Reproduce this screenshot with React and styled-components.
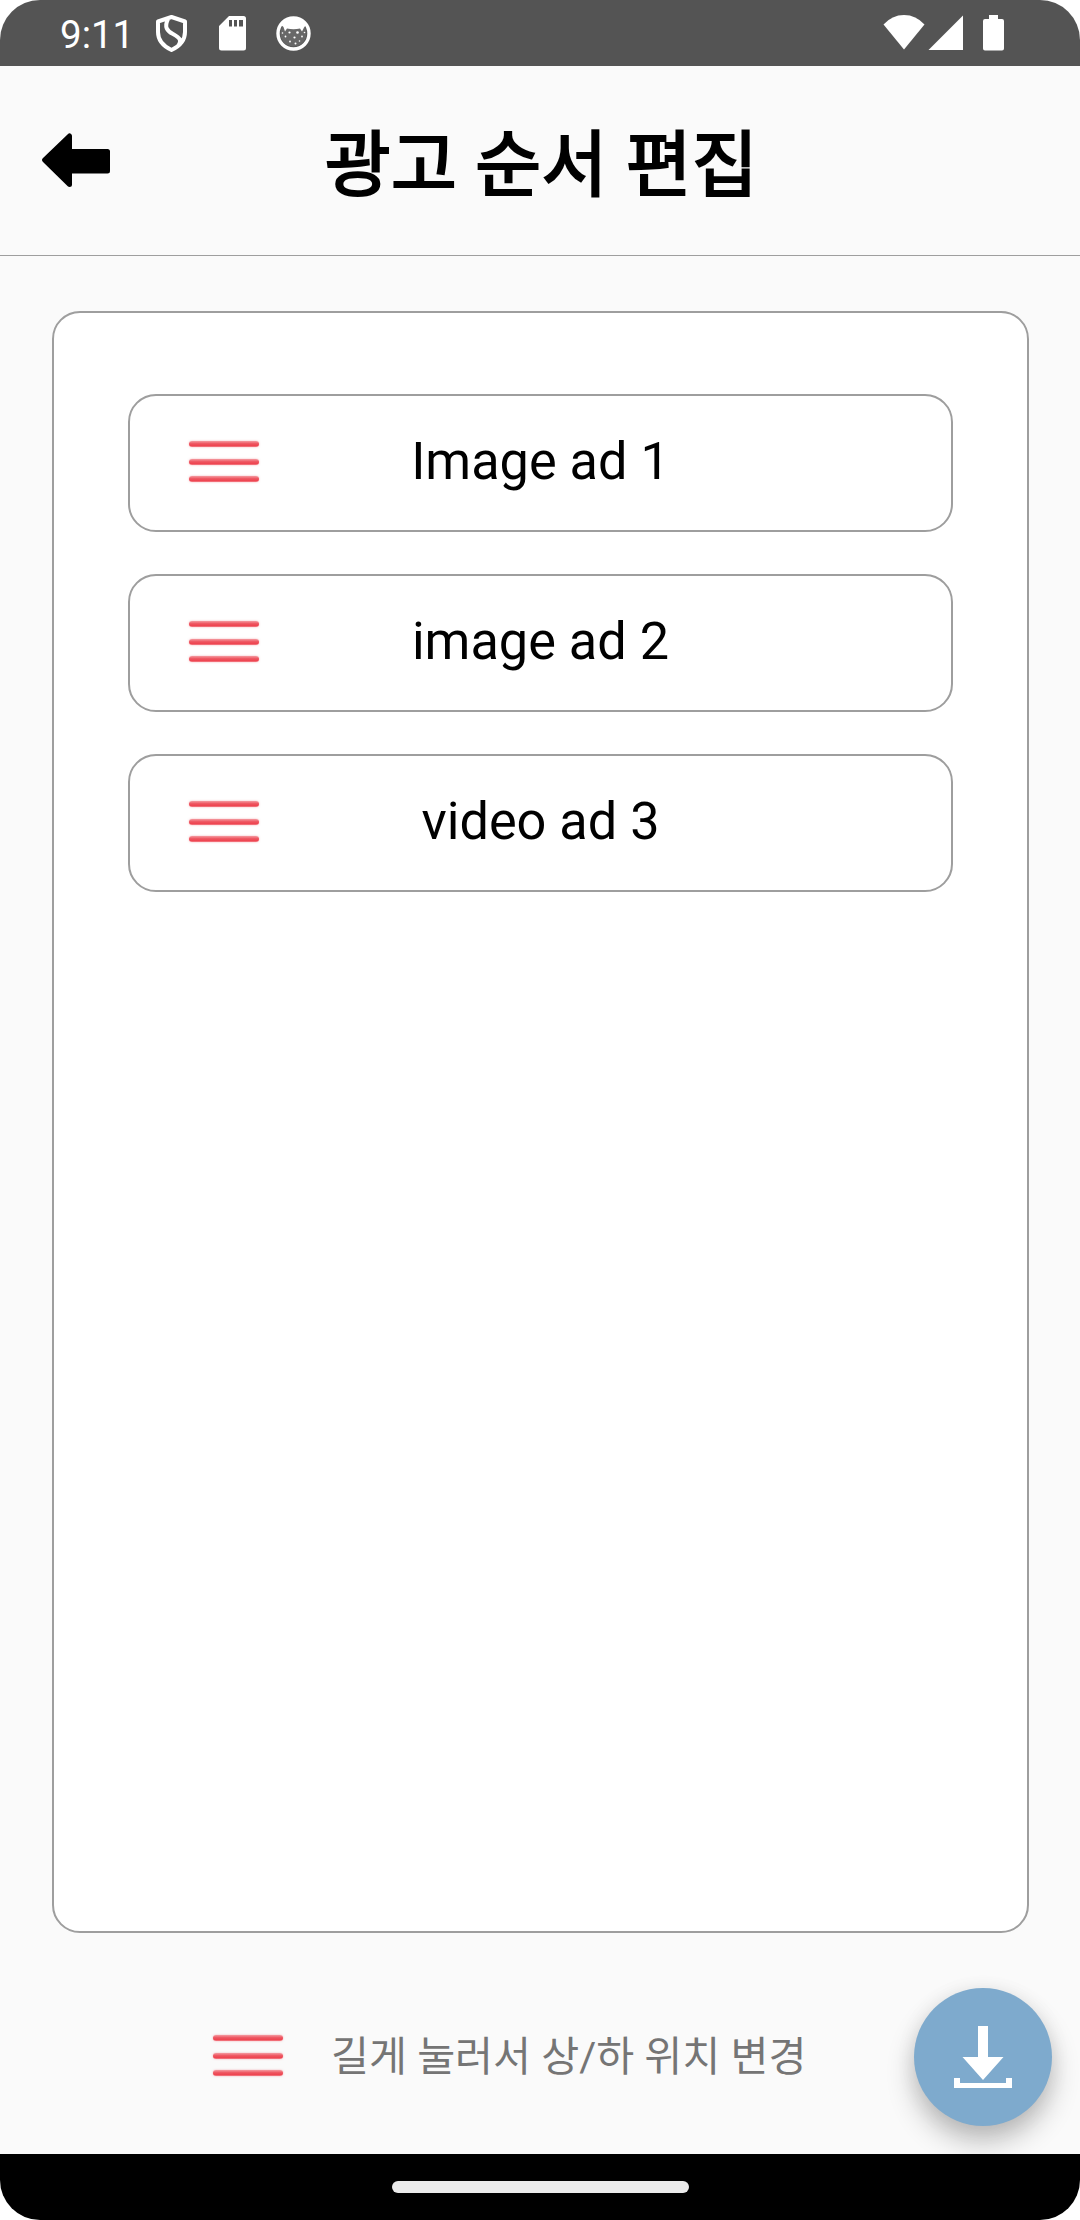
import React from "react";
import styled, { createGlobalStyle } from "styled-components";

const Global = createGlobalStyle`
  * { box-sizing: border-box; }
  body { margin: 0; background: #fff; font-family: Roboto, "Noto Sans CJK KR", sans-serif; }
`;

const Screen = styled.div`
  width: 1080px;
  height: 2220px;
  display: flex;
  flex-direction: column;
  background: #fafafa;
  border-radius: 40px;
  overflow: hidden;
`;

const StatusBar = styled.div`
  height: 66px;
  flex: none;
  display: flex;
  align-items: center;
  background: #545454;
  color: #fff;
  padding: 0 76px 0 60px;
`;

const Clock = styled.span`
  width: 92px;
  font-size: 38.5px;
  line-height: 66px;
  padding-top: 3px;
`;

const StatusIcon = styled.svg`
  display: block;
  flex: none;
  width: ${(p) => p.$w}px;
  height: 66px;
  margin-left: ${(p) => p.$gap || 0}px;
  fill: #fff;
`;

const Spacer = styled.div`
  flex: 1;
`;

const Header = styled.header`
  height: 190px;
  flex: none;
  display: grid;
  grid-template-columns: 150px 1fr 150px;
  align-items: center;
  border-bottom: 1px solid #9e9e9e;
`;

const BackButton = styled.button`
  border: 0;
  padding: 0;
  margin: -2px 0 0 40px;
  width: 72px;
  height: 58px;
  background: none;
  svg { display: block; }
`;

const Title = styled.h1`
  margin: 0;
  padding: 10px 0 0 3px;
  font-size: 71.5px;
  font-weight: 400;
  line-height: 100px;
  letter-spacing: 0.4px;
  text-align: center;
  color: #000;
  -webkit-text-stroke: 2.2px #000;
`;

const Main = styled.main`
  flex: 1;
  display: flex;
  flex-direction: column;
  padding: 55px 51px 0 52px;
`;

const Panel = styled.section`
  height: 1622px;
  flex: none;
  display: flex;
  flex-direction: column;
  gap: 42px;
  padding: 81px 74px;
  background: #fff;
  border: 2px solid #9e9e9e;
  border-radius: 28px;
`;

const AdRow = styled.div`
  height: 138px;
  display: grid;
  grid-template-columns: 72px 1fr 72px;
  align-items: center;
  padding: 0 58px;
  border: 2px solid #9e9e9e;
  border-radius: 28px;
`;

const AdName = styled.span`
  font-size: 52.25px;
  line-height: 62px;
  padding-bottom: 3px;
  text-align: center;
  color: #000;
`;

const Handle = styled.span`
  width: 72px;
  display: flex;
  flex-direction: column;
  align-items: center;
  gap: 11.3px;
  padding-bottom: 3px;
`;

const Bar = styled.i`
  width: 70px;
  height: 6px;
  border-radius: 3px;
  background: linear-gradient(#f49aa0, #ee5560 45%, #ee4450 80%, #f48a92);
  box-shadow: 0 0 2px rgba(240, 90, 100, 0.5);
`;

const Footer = styled.footer`
  flex: 1;
  display: flex;
  align-items: center;
  padding: 27px 0 0 160px;
`;

const Hint = styled.span`
  margin-left: 47px;
  font-size: 41.25px;
  line-height: 60px;
  color: #757575;
`;

const SaveButton = styled.button`
  width: 138px;
  height: 138px;
  margin-left: auto;
  margin-right: -23px;
  padding: 0;
  border: 0;
  border-radius: 50%;
  background: #7eaacd;
  box-shadow: 0 16px 28px rgba(0, 0, 0, 0.24), 0 3px 20px rgba(0, 0, 0, 0.08);
  svg { display: block; }
`;

const NavBar = styled.nav`
  position: relative;
  height: 66px;
  flex: none;
  display: flex;
  align-items: center;
  justify-content: center;
  background: #000;
`;

const HomePill = styled.div`
  width: 297px;
  height: 12px;
  border-radius: 6px;
  background: #ebebeb;
`;

const ads = ["Image ad 1", "image ad 2", "video ad 3"];

function DragHandle() {
  return (
    <Handle>
      <Bar />
      <Bar />
      <Bar />
    </Handle>
  );
}

export default function App() {
  return (
    <Screen>
      <Global />
      <StatusBar>
        <Clock>9:11</Clock>
        <StatusIcon $w={32} $gap={4} viewBox="0 0 32 66">
          <path
            d="M15.5 17 L29 21.5 V32 C29 41 23 46.500 15.500 50 C8 46.500 2 41 2 32 V21.500 Z M12 19 C8 27 11 31 17 34 C24 38 26 40 22 46"
            fill="none"
            stroke="#fff"
            strokeWidth="4"
            strokeLinejoin="round"
          />
        </StatusIcon>
        <StatusIcon $w={27} $gap={31} viewBox="0 0 27 66">
          <path
            fillRule="evenodd"
            d="M10 16 H24.500 Q27 16 27 18.500 V48 Q27 50.500 24.500 50.500 H2.500 Q0 50.500 0 48 V26 Z M10 20 V26.500 H13 V20 Z M15 20 V26.500 H18 V20 Z M20 20 V26.500 H24 V20 Z"
          />
        </StatusIcon>
        <StatusIcon $w={35} $gap={30} viewBox="0 0 35 66">
          <circle cx="17.500" cy="33.500" r="15.500" fill="none" stroke="#fff" strokeWidth="3.400" />
          <circle cx="17.500" cy="33.500" r="13" fillOpacity="0.120" />
          <path d="M5 25 Q9 17 17.500 17 Q26 17 30 25 L28 27.500 L26 31.500 L24 28.500 Q17.500 30 11 28.500 L9 31.500 L7.500 27 Z" />
          <g>
            <circle cx="13.500" cy="32.500" r="1.100" />
            <circle cx="21.500" cy="32.500" r="1.300" />
            <circle cx="18.500" cy="37.500" r="1.100" />
            <circle cx="9.500" cy="36.500" r="0.900" />
            <circle cx="26" cy="36.500" r="0.900" />
            <circle cx="14" cy="41.500" r="0.900" />
            <circle cx="19.500" cy="43.500" r="1" />
            <circle cx="23.500" cy="41" r="0.800" />
            <circle cx="6.500" cy="33" r="0.800" />
            <circle cx="28.500" cy="32.500" r="0.800" />
          </g>
        </StatusIcon>
        <Spacer />
        <StatusIcon $w={42} viewBox="0 0 42 66">
          <path d="M0.500 24.500 Q9 15 21 15 Q33 15 41.500 24.500 L21 49.500 Z" />
        </StatusIcon>
        <StatusIcon $w={35} $gap={3} viewBox="0 0 35 66">
          <path d="M35 15.500 V50 H0.500 Z" />
        </StatusIcon>
        <StatusIcon $w={21} $gap={20} viewBox="0 0 21 66">
          <path d="M6 15 H15 V19 H19 Q21 19 21 21 V48.500 Q21 50.500 19 50.500 H2 Q0 50.500 0 48.500 V21 Q0 19 2 19 H6 Z" />
        </StatusIcon>
      </StatusBar>
      <Header>
        <BackButton aria-label="Back">
          <svg width="72" height="58" viewBox="0 0 72 58">
            <path
              d="M4.500 29 L29.500 5 V20.500 H67.500 V40 H29.500 V53.500 Z"
              stroke="#000"
              strokeWidth="5"
              strokeLinejoin="round"
            />
          </svg>
        </BackButton>
        <Title>광고 순서 편집</Title>
      </Header>
      <Main>
        <Panel>
          {ads.map((name) => (
            <AdRow key={name}>
              <DragHandle />
              <AdName>{name}</AdName>
            </AdRow>
          ))}
        </Panel>
        <Footer>
          <DragHandle />
          <Hint>길게 눌러서 상/하 위치 변경</Hint>
          <SaveButton aria-label="Save">
            <svg width="138" height="138" viewBox="0 0 138 138" fill="#fff">
              <path d="M64 38 H74 V69 H89.500 L69 92 L48.500 69 H64 Z" />
              <path d="M40 90 H46 V95 H92 V90 H98 V100 H40 Z" />
            </svg>
          </SaveButton>
        </Footer>
      </Main>
      <NavBar>
        <HomePill />
      </NavBar>
    </Screen>
  );
}
